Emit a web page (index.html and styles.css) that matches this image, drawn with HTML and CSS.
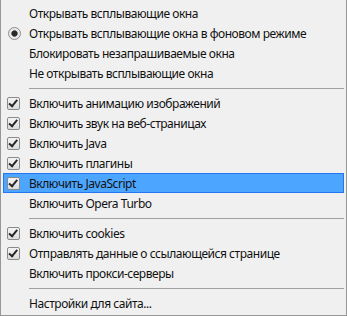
FILE: index.html
```html
<!DOCTYPE html>
<html lang="ru">
<head>
  <meta charset="UTF-8">
  <title>Быстрые настройки</title>
  <link rel="stylesheet" href="styles.css">
</head>
<body>
  <div class="menu">
    <div class="item"><span class="mark"></span><span class="label">Открывать всплывающие окна</span></div>
    <div class="item"><span class="mark"><span class="radio"></span></span><span class="label">Открывать всплывающие окна в фоновом режиме</span></div>
    <div class="item"><span class="mark"></span><span class="label">Блокировать незапрашиваемые окна</span></div>
    <div class="item"><span class="mark"></span><span class="label">Не открывать всплывающие окна</span></div>
    <div class="sep"></div>
    <div class="item"><span class="mark"><span class="check"></span></span><span class="label">Включить анимацию изображений</span></div>
    <div class="item"><span class="mark"><span class="check"></span></span><span class="label">Включить звук на веб-страницах</span></div>
    <div class="item"><span class="mark"><span class="check"></span></span><span class="label">Включить Java</span></div>
    <div class="item"><span class="mark"><span class="check"></span></span><span class="label">Включить плагины</span></div>
    <div class="item active"><span class="mark"><span class="check"></span></span><span class="label">Включить JavaScript</span></div>
    <div class="item"><span class="mark"></span><span class="label">Включить Opera Turbo</span></div>
    <div class="sep"></div>
    <div class="item"><span class="mark"><span class="check"></span></span><span class="label">Включить cookies</span></div>
    <div class="item"><span class="mark"><span class="check"></span></span><span class="label">Отправлять данные о ссылающейся странице</span></div>
    <div class="item"><span class="mark"></span><span class="label">Включить прокси-серверы</span></div>
    <div class="sep"></div>
    <div class="item"><span class="mark"></span><span class="label">Настройки для сайта...</span></div>
  </div>
</body>
</html>
```

FILE: styles.css
```css
body {
  margin: 0;
}

.menu {
  width: 347px;
  height: 316px;
  box-sizing: border-box;
  padding: 3px 2px 0;
  border: 1px solid #979797;
  border-top: none;
  background: #f0f0f0;
  font-family: "Noto Sans", sans-serif;
  font-size: 12px;
  letter-spacing: -0.45px;
  color: #111;
}

.item {
  height: 20px;
  box-sizing: border-box;
  display: flex;
  align-items: center;
  border: 1px solid transparent;
}
.item.active {
  background: #4ca6ff;
  border-color: #2477f0;
}

.mark {
  width: 22px;
  padding-left: 3px;
  display: flex;
  align-items: center;
}

.check {
  width: 11px;
  height: 11px;
  border: 1px solid #8a8a8a;
  border-radius: 2px;
  background: linear-gradient(#f4f4f4, #dcdcdc);
  position: relative;
}
.check::after {
  content: "";
  position: absolute;
  left: 2px;
  top: 0px;
  width: 3px;
  height: 7px;
  border: solid #262626;
  border-width: 0 2px 2px 0;
  transform: rotate(40deg);
  transform-origin: 60% 60%;
}

.radio {
  width: 11px;
  height: 11px;
  margin-left: 1px;
  border: 1px solid #8c8c8c;
  border-radius: 50%;
  background: radial-gradient(circle, #2a2a2a 0 2.6px, #6a6a6a 3px, #e6e6e6 3.6px, #f4f4f4);
}

.sep {
  height: 10px;
  margin-left: 26px;
  box-sizing: border-box;
  padding-top: 5px;
}
.sep::before {
  content: "";
  display: block;
  border-top: 1px solid #a0a0a0;
}
```
